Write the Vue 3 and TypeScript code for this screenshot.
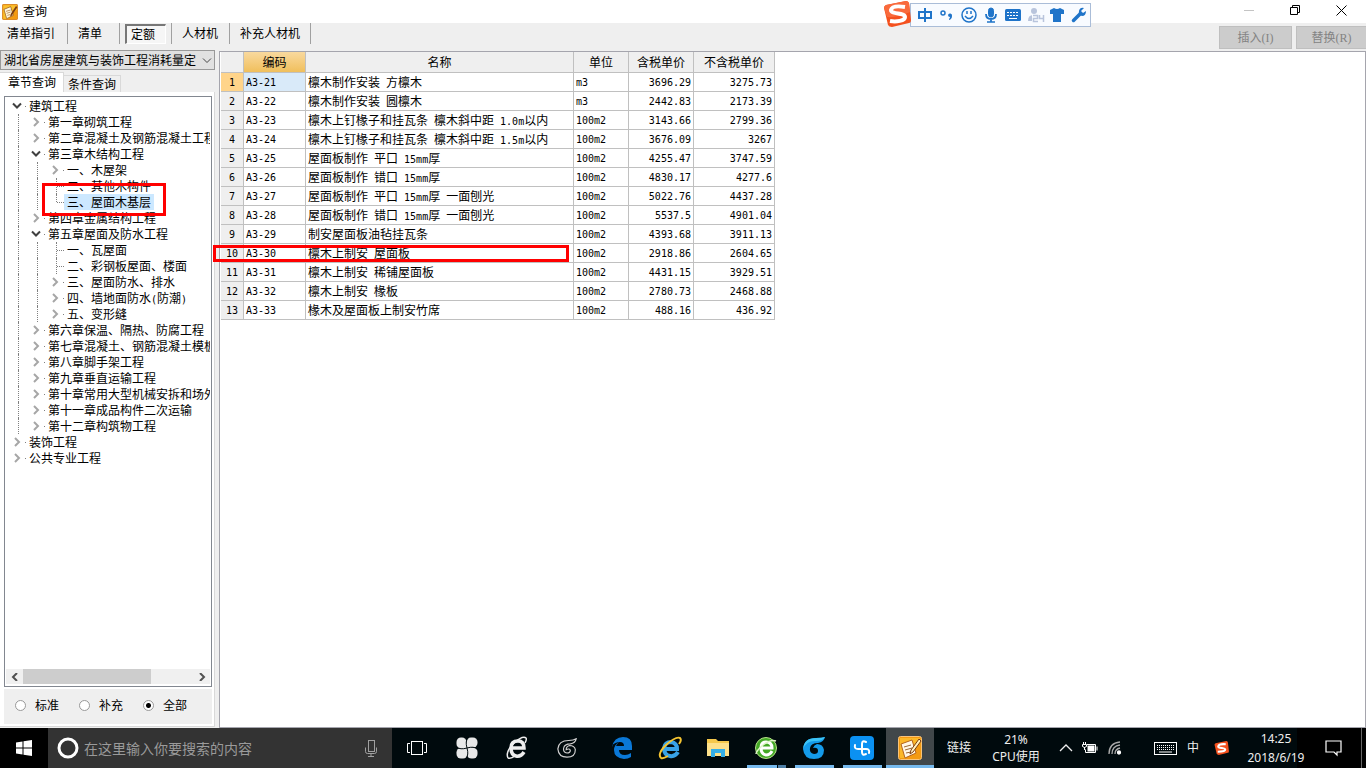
<script setup lang="ts">
import { ref } from 'vue'

interface TreeRow {
  label: string
  level: number
  kind: 'open' | 'closed' | 'leaf' | 'last'
}

interface QuotaRow {
  code: string
  name: string
  unit: string
  taxed: string
  untaxed: string
}

const modes = ['清单指引', '清单', '定额', '人材机', '补充人材机']
const activeMode = ref('定额')
const scope = ref('全部')
const selectedNode = ref('三、屋面木基层')
const selectedRow = ref(0)
const keyword = ref('')

const tree: TreeRow[] = [
  { label: '建筑工程', level: 0, kind: 'open' },
  { label: '第一章砌筑工程', level: 1, kind: 'closed' },
  { label: '第二章混凝土及钢筋混凝土工程', level: 1, kind: 'closed' },
  { label: '第三章木结构工程', level: 1, kind: 'open' },
  { label: '一、木屋架', level: 2, kind: 'closed' },
  { label: '二、其他木构件', level: 2, kind: 'leaf' },
  { label: '三、屋面木基层', level: 2, kind: 'last' },
  { label: '第四章金属结构工程', level: 1, kind: 'closed' },
  { label: '第五章屋面及防水工程', level: 1, kind: 'open' },
  { label: '一、瓦屋面', level: 2, kind: 'leaf' },
  { label: '二、彩钢板屋面、楼面', level: 2, kind: 'leaf' },
  { label: '三、屋面防水、排水', level: 2, kind: 'closed' },
  { label: '四、墙地面防水(防潮)', level: 2, kind: 'closed' },
  { label: '五、变形缝', level: 2, kind: 'closed' },
  { label: '第六章保温、隔热、防腐工程', level: 1, kind: 'closed' },
  { label: '第七章混凝土、钢筋混凝土模板', level: 1, kind: 'closed' },
  { label: '第八章脚手架工程', level: 1, kind: 'closed' },
  { label: '第九章垂直运输工程', level: 1, kind: 'closed' },
  { label: '第十章常用大型机械安拆和场外', level: 1, kind: 'closed' },
  { label: '第十一章成品构件二次运输', level: 1, kind: 'closed' },
  { label: '第十二章构筑物工程', level: 1, kind: 'closed' },
  { label: '装饰工程', level: 0, kind: 'closed' },
  { label: '公共专业工程', level: 0, kind: 'closed' },
]

const rows: QuotaRow[] = [
  { code: 'A3-21', name: '檩木制作安装 方檩木', unit: 'm3', taxed: '3696.29', untaxed: '3275.73' },
  { code: 'A3-22', name: '檩木制作安装 圆檩木', unit: 'm3', taxed: '2442.83', untaxed: '2173.39' },
  { code: 'A3-23', name: '檩木上钉椽子和挂瓦条 檩木斜中距 1.0m以内', unit: '100m2', taxed: '3143.66', untaxed: '2799.36' },
  { code: 'A3-24', name: '檩木上钉椽子和挂瓦条 檩木斜中距 1.5m以内', unit: '100m2', taxed: '3676.09', untaxed: '3267' },
  { code: 'A3-25', name: '屋面板制作 平口 15mm厚', unit: '100m2', taxed: '4255.47', untaxed: '3747.59' },
  { code: 'A3-26', name: '屋面板制作 错口 15mm厚', unit: '100m2', taxed: '4830.17', untaxed: '4277.6' },
  { code: 'A3-27', name: '屋面板制作 平口 15mm厚 一面刨光', unit: '100m2', taxed: '5022.76', untaxed: '4437.28' },
  { code: 'A3-28', name: '屋面板制作 错口 15mm厚 一面刨光', unit: '100m2', taxed: '5537.5', untaxed: '4901.04' },
  { code: 'A3-29', name: '制安屋面板油毡挂瓦条', unit: '100m2', taxed: '4393.68', untaxed: '3911.13' },
  { code: 'A3-30', name: '檩木上制安 屋面板', unit: '100m2', taxed: '2918.86', untaxed: '2604.65' },
  { code: 'A3-31', name: '檩木上制安 稀铺屋面板', unit: '100m2', taxed: '4431.15', untaxed: '3929.51' },
  { code: 'A3-32', name: '檩木上制安 椽板', unit: '100m2', taxed: '2780.73', untaxed: '2468.88' },
  { code: 'A3-33', name: '椽木及屋面板上制安竹席', unit: '100m2', taxed: '488.16', untaxed: '436.92' },
]

// Splits a label into half-width and full-width runs.
function runs(text: string): { text: string; half: boolean }[] {
  return (text.match(/[\x20-\x7e]+|[^\x20-\x7e]+/g) ?? []).map((t) => ({
    text: t,
    half: /^[\x20-\x7e]/.test(t),
  }))
}
</script>

<template>
  <div class="desktop">
    <header class="titlebar">
      <svg class="app-icon" width="16" height="16" viewBox="0 0 24 24">
        <rect x="0.5" y="0.5" width="23" height="23" rx="2" fill="#f39a12" stroke="#c96a08" />
        <path d="M2 2h20v6L9 22H2z" fill="#fbc02d" />
        <path d="M3 8l10-4 4 13-10 5z" fill="#fff7dd" stroke="#8a4b12" />
        <path d="M6 11l7-2M7 14l6-2M8 17l4-1" stroke="#a0622a" fill="none" />
        <path d="M21 3l-8 12-1 4 3-2 8-12z" fill="#7a3c10" />
      </svg>
      <h1>查询</h1>
      <div class="win-controls">
        <button aria-label="最小化"><svg width="11" height="11"><path d="M0 5.500h10" stroke="#c4c4c4" /></svg></button>
        <button aria-label="还原">
          <svg width="11" height="11" fill="none" stroke="#000"><path d="M.5 2.500h7v7h-7zM2.500 2.500v-2h7v7h-2" /></svg>
        </button>
        <button aria-label="关闭"><svg width="11" height="11"><path d="M.5.5l10 10M10.500.5l-10 10" stroke="#000" /></svg></button>
      </div>
    </header>

    <nav class="toolbar">
      <div v-for="m in modes" :key="m" class="mode-slot" :class="{ pressed: m === activeMode }">
        <button @click="activeMode = m">{{ m }}</button>
      </div>
      <div class="actions">
        <button disabled>插入<span class="latin">(I)</span></button>
        <button disabled>替换<span class="latin">(R)</span></button>
      </div>
    </nav>

    <div class="ime-bar">
      <svg class="ime-logo" width="30" height="28" viewBox="0 0 30 28">
        <path d="M3 5L23 1q2 0 3 2l2 17q0 3-2 3L9 27q-3 0-4-2L1 8q0-2 2-3z" fill="#f4511e" />
        <path d="M3 5L23 1q2 0 3 2l1 9Q14 18 4 17L1 8q0-2 2-3z" fill="#f96a3c" />
        <path d="M22 7Q9 5 8 10c0 5 14 2 14 7 0 4-9 5-15 4" fill="none" stroke="#fff" stroke-width="4" />
      </svg>
      <div class="ime-icons">
        <button aria-label="中文"><svg width="16" height="16" fill="none" stroke="#1f74c9" stroke-width="2"><path d="M2 5h12v6H2zM8 1v14" /></svg></button>
        <button aria-label="标点"><svg width="16" height="16"><circle cx="4" cy="6" r="2" fill="none" stroke="#1f74c9" stroke-width="1.500" /><path d="M9 8a2 2 0 1 1 4 1q0 3-3 4v-1q1-1 1-2-2 0-2-2z" fill="#1f74c9" /></svg></button>
        <button aria-label="表情"><svg width="16" height="16" fill="none" stroke="#1f74c9" stroke-width="1.500"><circle cx="8" cy="8" r="7" /><path d="M6 4v3M10 4v3M4 9q4 5 8 0" /></svg></button>
        <button aria-label="语音"><svg width="16" height="16" fill="none" stroke="#1f74c9"><rect x="5.500" y="1" width="5" height="9" rx="2.500" fill="#1f74c9" /><path d="M3 7q0 5 5 5t5-5M8 12v3" stroke-width="1.800" /><path d="M4 15h8" stroke-width="1.500" /></svg></button>
        <button aria-label="键盘"><svg width="16" height="16"><rect y="2" width="16" height="12" rx="1.500" fill="#1f74c9" /><path d="M2 5.500h12M2 8.500h12" stroke="#fff" stroke-dasharray="2 1" /><path d="M4 11.500h8" stroke="#fff" /></svg></button>
        <button aria-label="账号" class="user"><svg width="18" height="16"><circle cx="7" cy="4" r="3" fill="#b8c4dc" /><path d="M1 14q0-6 5-6h5v6z" fill="#b8c4dc" /><path d="M5 7h13v9H5z" fill="#f8fbff" /><path d="M6 8.500h4.500v3H6.500v3H11M12.500 8v3.500h4M16.500 8v7" fill="none" stroke="#b8c4dc" stroke-width="1.500" /></svg></button>
        <button aria-label="皮肤"><svg width="16" height="16"><path d="M1 3l4-2q3 2 6 0l4 2v4h-3v8H4V7H1z" fill="#1f74c9" /></svg></button>
        <button aria-label="工具"><svg width="16" height="16"><path d="M2.500 13.500L9 7" stroke="#1f74c9" stroke-width="3.500" stroke-linecap="round" /><path d="M13 1q-4-1-5 3-1 4 3 5 4 0 4-5l-3 2-2-2z" fill="#1f74c9" /></svg></button>
      </div>
    </div>

    <main class="content">
      <aside class="side">
        <div class="combo">
          <select aria-label="定额库"><option>湖北省房屋建筑与装饰工程消耗量定</option></select>
          <svg width="10" height="6" fill="none" stroke="#444"><path d="M1 .5l4 4 4-4" /></svg>
        </div>
        <div class="tabs" role="tablist">
          <button role="tab" aria-selected="true" class="on">章节查询</button>
          <button role="tab" aria-selected="false">条件查询</button>
        </div>
        <div class="pane">
          <div class="tree-box">
            <ul class="tree" role="tree">
              <li
                v-for="n in tree"
                :key="n.label"
                role="treeitem"
                :aria-selected="n.label === selectedNode"
                @click="selectedNode = n.label"
              >
                <template v-if="n.level > 0">
                  <i class="guide"></i>
                  <i v-if="n.level > 1" class="guide"></i>
                </template>
                <i v-if="n.kind === 'leaf' || n.kind === 'last'" class="elbow" :class="n.kind"></i>
                <button v-else class="twist" :class="n.kind" aria-label="展开或折叠">
                  <svg v-if="n.kind === 'open'" width="10" height="10" fill="none" stroke="#404040" stroke-width="2"><path d="M1 2.500l4 4 4-4" /></svg>
                  <svg v-else width="10" height="10" fill="none" stroke="#a6a6a6" stroke-width="2"><path d="M3 1l4 4-4 4" /></svg>
                </button>
                <span class="label" :class="{ selected: n.label === selectedNode }"><span v-for="(r, i) in runs(n.label)" :key="i" :class="{ half: r.half }">{{ r.text }}</span></span>
              </li>
            </ul>
            <div class="hscroll">
              <button aria-label="向左"><svg width="8" height="8" fill="none" stroke="#505050" stroke-width="2"><path d="M6 0L2 4l4 4" /></svg></button>
              <div class="track"><div class="thumb"></div></div>
              <button aria-label="向右"><svg width="8" height="8" fill="none" stroke="#505050" stroke-width="2"><path d="M2 0l4 4-4 4" /></svg></button>
            </div>
          </div>
          <div class="scope">
            <label v-for="s in ['标准', '补充', '全部']" :key="s"><input v-model="scope" type="radio" name="scope" :value="s" />{{ s }}</label>
          </div>
          <div class="mark tree-mark"></div>
        </div>
      </aside>

      <section class="grid-pane">
        <table>
          <colgroup><col class="c-no" /><col class="c-code" /><col class="c-name" /><col class="c-unit" /><col class="c-tax" /><col class="c-net" /></colgroup>
          <thead>
            <tr><th></th><th class="sorted">编码</th><th>名称</th><th>单位</th><th>含税单价</th><th>不含税单价</th></tr>
          </thead>
          <tbody>
            <tr v-for="(r, i) in rows" :key="r.code" :class="{ current: i === selectedRow }" @click="selectedRow = i">
              <th scope="row"><span class="half">{{ i + 1 }}</span></th>
              <td class="code"><span class="half">{{ r.code }}</span></td>
              <td class="name"><span v-for="(p, k) in runs(r.name)" :key="k" :class="{ half: p.half }">{{ p.text }}</span></td>
              <td><span class="half">{{ r.unit }}</span></td>
              <td class="num"><span class="half">{{ r.taxed }}</span></td>
              <td class="num"><span class="half">{{ r.untaxed }}</span></td>
            </tr>
          </tbody>
        </table>
        <div class="mark row-mark"></div>
      </section>
    </main>

    <footer class="taskbar">
      <button class="start" aria-label="开始">
        <svg width="16" height="16" fill="#fff"><path d="M0 2.500L6.500 1.500v6H0zM7.500 1.300L16 0v7.500H7.500zM0 8.500h6.500v6L0 13.500zM7.500 8.500H16V16l-8.500-1.300z" /></svg>
      </button>
      <label class="search">
        <svg width="22" height="22" fill="none"><circle cx="11" cy="11" r="9" stroke="#fff" stroke-width="3" /></svg>
        <input v-model="keyword" type="text" placeholder="在这里输入你要搜索的内容" />
        <svg width="12" height="18" fill="none" stroke="#a0a0a0"><rect x="3.500" y="1.500" width="6" height="11" /><path d="M.5 8.500v4q0 2 2 2h7q2 0 2-2v-4M6 14.500v3M3 17.500h6" /></svg>
      </label>
      <div class="apps wide">
        <button aria-label="任务视图"><svg width="20" height="16" fill="none" stroke="#fff"><rect x="4.500" y="1.500" width="11" height="13" /><path d="M3 3.500H.5v9H3M17 3.500h2.500v9H17" /></svg></button>
        <button aria-label="风扇">
          <svg width="22" height="22" fill="#e8e8e8"><rect x="0.500" y="0.500" width="10" height="11" rx="4.500" /><rect x="10.500" y="0.500" width="11" height="10" rx="4.500" /><rect x="11" y="10.500" width="10.500" height="11" rx="4.500" /><rect x="0.500" y="11" width="11" height="10.500" rx="4.500" /><path d="M6 6h10v10H6z" /><path d="M11 11Q4 13 1 10M11 11Q9 4 12 1M11 11q7-2 10 1M11 11q2 7-1 10" fill="none" stroke="#000a0d" /></svg>
        </button>
        <button aria-label="浏览器"><svg width="22" height="24" fill="none" stroke="#eee"><path d="M18 16q-3 5-8 4-5-1-5-8 0-7 7-7 6 0 6 7H6" stroke-width="3.500" /><path d="M2 22Q-1 16 8 7 17-1 20 2q1 1-1 5M2 22q3 1 7-2" stroke-width="1.500" /></svg></button>
        <button aria-label="广联达"><svg width="20" height="20" viewBox="0 0 24 24" fill="none" stroke="#d0d0d0" stroke-width="1.400"><path d="M23 1q-3 2-9 2Q2 3 1 13q1 10 11 10 10 0 10-9-1-5-7-5-4 1-4 5 4-2 5 1 0 3-4 3-5-1-4-6Q9 7 16 7q6-1 7-6z" /></svg></button>
      </div>
      <div class="apps">
        <button aria-label="Edge"><svg width="20" height="22" fill="#0a78d7"><path d="M0 10Q2 0 11 0q9 0 9 9v4H7q0 5 6 5 3 0 6-2v4q-3 2-7 2-10-1-10-9 0-5 5-8-2 2-3 4h8q0-4-4-4-6 0-9 5z" /></svg></button>
        <button aria-label="Internet Explorer"><svg width="24" height="24" fill="none"><path d="M20 16q-3 5-8 4-6-1-6-8 1-6 7-6 6 1 6 7H7" stroke="#38a3e8" stroke-width="4" /><path d="M3 22Q-1 18 8 9 18 0 22 2q2 2-1 6M3 22q2 1 7-2" stroke="#f5c531" stroke-width="2" /></svg></button>
        <button aria-label="文件资源管理器"><svg width="22" height="18"><path d="M0 0h9l2 2h11v15H0z" fill="#f5c84c" /><path d="M0 4h22v13H0z" fill="#fde08a" /><path d="M4 18v-8h14v8h-4v-4H8v4z" fill="#35aee6" /></svg></button>
        <button aria-label="360浏览器" class="running multi"><svg width="22" height="22" fill="none"><circle cx="11" cy="11" r="10.500" fill="#43a825" stroke="#b6e08a" /><path d="M17 14q-2 4-6 4-5-1-5-7t5-6q6 0 6 6H7" stroke="#fff" stroke-width="3" /><path d="M1 17Q1 14 8 8 16 2 21 4" stroke="#dff5c8" stroke-width="1.500" /></svg></button>
        <button aria-label="广联达云" class="running"><svg width="24" height="24"><path d="M23 1q-3 1-9 1Q2 2 1 13q1 10 11 10 10 0 10-9-1-6-7-6-3 1-4 4 5-1 5 3 0 3-4 3-5-1-4-6Q9 7 16 7q6-1 7-6z" fill="#149bea" /><path d="M23 1q-3 1-9 1Q2 2 1 13 5 4 14 5q7 0 9-4z" fill="#3cc4f7" /></svg></button>
        <button aria-label="云助手" class="running"><svg width="24" height="24" fill="none"><rect width="24" height="24" rx="4" fill="#0b91f2" /><path d="M16 6q-4-2-4 2v8q0 4 4 2M5 9q-1 4 3 4h8q4 0 3 4" stroke="#fff" stroke-width="2" stroke-linecap="round" /></svg></button>
        <button aria-label="查询" class="running focused"><svg width="24" height="24" viewBox="0 0 24 24"><rect x="0.500" y="0.500" width="23" height="23" rx="2" fill="#f39a12" stroke="#f9c47a" /><path d="M2 2h20v5L8 22H2z" fill="#fbb829" /><path d="M3 8l11-4 4 13-11 5z" fill="#fff7e6" stroke="#b5651d" /><path d="M6 11l7-2M7 14l7-2M8 17l5-1" stroke="#9b6a3a" fill="none" /><path d="M21 3l-8 11-1 4 3-2 8-11z" fill="#fff0c0" stroke="#7a3c10" /></svg></button>
      </div>
      <div class="tray">
        <span class="links">链接</span>
        <span class="cpu">21%<br />CPU使用</span>
        <button class="t24" aria-label="显示隐藏的图标"><svg width="14" height="8" fill="none" stroke="#eee" stroke-width="1.300"><path d="M1 7l6-6 6 6" /></svg></button>
        <button class="t24" aria-label="电源"><svg width="16" height="12" fill="none" stroke="#fff"><path d="M5 2.500h8.500v8h-10v-3" /><rect x="6" y="4" width="6" height="5" fill="#fff" /><path d="M15 4.500v4M1.500 0v2M3.500 0v2M.5 2.500h4v2l-2 1-2-1zM2.500 5v3" /></svg></button>
        <button class="wifi" aria-label="网络"><svg width="14" height="14" fill="none" stroke="#aaa" stroke-width="1.300"><path d="M1 13Q1 2 12 1M4 13q0-8 8-9M7 13q0-5 5-6" /><circle cx="11" cy="11.500" r="1.500" fill="#fff" stroke="#fff" /></svg></button>
        <button class="t28" aria-label="触摸键盘"><svg width="23" height="13" fill="none" stroke="#fff"><rect x="0.500" y="0.500" width="22" height="12" /><path d="M3 3.500h17M3 5.500h17M3 7.500h17" stroke-dasharray="1 1" /><path d="M5 10h13" /></svg></button>
        <button class="t28">中</button>
        <button class="t30" aria-label="搜狗输入法"><svg width="16" height="16" viewBox="0 0 30 28"><path d="M3 5L23 1q2 0 3 2l2 17q0 3-2 3L9 27q-3 0-4-2L1 8q0-2 2-3z" fill="#f4511e" /><path d="M22 7Q9 6 8 11c0 4 13 2 13 6 0 4-8 4-14 4" fill="none" stroke="#fff" stroke-width="4" /></svg></button>
        <span class="clock">14:25<br />2018/6/19</span>
        <button class="note" aria-label="操作中心"><svg width="18" height="17" fill="none" stroke="#fff"><path d="M1 1h15v11h-4v3l-3-3H1z" stroke-width="1.200" /></svg></button>
        <i class="peek"></i>
      </div>
    </footer>
  </div>
</template>

<style>
body {
  margin: 0;
  background: #efefef;
}
</style>

<style scoped>
.desktop {
  position: relative;
  display: flex;
  flex-direction: column;
  min-height: 100vh;
  background: #efefef;
  color: #000;
  font-family: "Liberation Sans", "Noto Sans CJK SC", sans-serif;
  font-size: 12px;
  line-height: 16px;
}
button {
  display: inline-flex;
  align-items: center;
  justify-content: center;
  margin: 0;
  padding: 0;
  border: 0;
  background: none;
  color: inherit;
  font: inherit;
}
svg {
  display: block;
  flex: none;
}
.half {
  font-family: "DejaVu Sans Mono", monospace;
  font-size: 10px;
  line-height: 10px;
  white-space: pre;
}

.titlebar {
  display: flex;
  align-items: center;
  height: 23px;
  padding-left: 2px;
  background: #fff;
}
.titlebar h1 {
  margin: 0 0 0 5px;
  font-size: 12px;
  font-weight: 400;
}
.win-controls {
  display: flex;
  margin-left: auto;
  margin-right: 2px;
  margin-bottom: 3px;
}
.win-controls button {
  width: 46px;
}

.toolbar {
  display: flex;
  align-items: flex-start;
  height: 27px;
}
.mode-slot {
  height: 21px;
  padding: 0 10px;
  border-right: 1px solid #a0a0a0;
}
.mode-slot button {
  height: 20px;
  padding-top: 2px;
  white-space: nowrap;
}
.mode-slot:first-child {
  padding: 0 12px 0 7px;
}
.mode-slot:nth-child(2) {
  padding: 0 17px 0 10px;
}
.mode-slot:nth-child(4) {
  padding: 0 11px 0 10px;
}
.mode-slot.pressed {
  box-sizing: border-box;
  height: 21px;
  padding: 1px 5px 0;
}
.mode-slot.pressed button {
  justify-content: flex-start;
  width: 41px;
  padding: 1px 0 0 4px;
  border: 1px solid #fff;
  border-top: 2px solid #777;
  border-left: 2px solid #777;
  background: #f6f6f6;
}
.actions {
  display: flex;
  gap: 4px;
  margin: 3px 0 0 auto;
}
.actions button {
  width: 73px;
  height: 23px;
  border: 1px solid #bfbfbf;
  background: #ccc;
  color: #838383;
}
.actions button:last-child {
  width: 70px;
  border-right: 0;
}
.latin {
  font-family: "Liberation Serif", serif;
  font-size: 12px;
}

.ime-bar {
  position: absolute;
  top: 3px;
  right: 275px;
  width: 181px;
  height: 24px;
  box-sizing: border-box;
  border: 1px solid #aabdd8;
  background: #f8fbff;
}
.ime-logo {
  position: absolute;
  left: -28px;
  top: -4px;
}
.ime-icons {
  display: flex;
  height: 22px;
  padding-left: 3px;
}
.ime-icons button {
  width: 22px;
}
.ime-icons .user {
  padding-left: 2px;
}

.content {
  display: flex;
  flex: 1;
}
.side {
  display: flex;
  flex: none;
  flex-direction: column;
  width: 215px;
}
.combo {
  position: relative;
  display: flex;
}
.combo select {
  width: 100%;
  height: 20px;
  padding: 2px 18px 0 3px;
  border: 1px solid #999;
  border-radius: 0;
  background: #e1e1e1;
  color: #000;
  font: inherit;
  appearance: none;
}
.combo svg {
  position: absolute;
  right: 3px;
  top: 8px;
}
.tabs {
  display: flex;
  align-items: flex-end;
  margin-top: 2px;
}
.tabs button {
  height: 17px;
  padding: 1px 4px 0;
  border: 1px solid #d9d9d9;
  border-bottom: 0;
  border-left: 0;
}
.tabs .on {
  height: 20px;
  padding: 0 7px 0 8px;
  background: #fff;
}
.pane {
  position: relative;
  display: flex;
  flex: 1;
  flex-direction: column;
  gap: 2px;
  padding: 4px 2px 2px 4px;
  border-right: 1px solid #d9d9d9;
  border-bottom: 1px solid #d9d9d9;
  margin-bottom: 1px;
  background: #fff;
}
.tree-box {
  display: flex;
  flex: 1;
  flex-direction: column;
  padding: 1px 1px 2px;
  border: 1px solid #828790;
}
.tree {
  flex: 1;
  margin: 0;
  padding: 0 0 0 1px;
  list-style: none;
  overflow: hidden;
}
.tree li {
  display: flex;
  height: 16px;
  line-height: 18px;
  white-space: nowrap;
}
.guide,
.elbow,
.twist {
  position: relative;
  flex: none;
  width: 19px;
  height: 16px;
}
.guide::before,
.elbow::before {
  content: "";
  position: absolute;
  left: 11px;
  top: 0;
  height: 16px;
  border-left: 1px dotted #808080;
}
.elbow.last::before {
  height: 8px;
}
.elbow::after {
  content: "";
  position: absolute;
  left: 12px;
  right: 0;
  top: 8px;
  border-top: 1px dotted #808080;
}
.twist::after {
  content: "";
  position: absolute;
  right: 0;
  top: 8px;
  width: 1px;
  height: 1px;
  background: #808080;
}
.label {
  padding: 0 3px;
}
.label.selected {
  background: #cce8ff;
}
.hscroll {
  display: flex;
  height: 15px;
  background: #f0f0f0;
}
.hscroll button {
  width: 17px;
}
.track {
  flex: 1;
}
.thumb {
  width: 75%;
  height: 100%;
  background: #cdcdcd;
}
.scope {
  display: flex;
  align-items: center;
  box-sizing: border-box;
  height: 35px;
  padding: 0 0 2px 11px;
  background: #efefef;
}
.scope label {
  display: flex;
  align-items: center;
  width: 64px;
}
.scope input {
  width: 11px;
  height: 11px;
  margin: 0 9px 0 0;
  border: 1px solid #999;
  border-radius: 50%;
  background: #fff;
  appearance: none;
}
.scope input:checked {
  background: radial-gradient(circle, #000 0 2px, #fff 3px);
}

.mark {
  position: absolute;
  box-sizing: border-box;
  border: 3px solid #f00;
  pointer-events: none;
}
.tree-mark {
  left: 42px;
  top: 91px;
  width: 124px;
  height: 33px;
}
.row-mark {
  left: -7px;
  top: 193px;
  width: 356px;
  height: 17px;
}

.grid-pane {
  position: relative;
  flex: 1;
  margin: 1px 0 0 4px;
  padding-left: 1px;
  border: 1px solid #a5a5ad;
  background: #fff;
}
table {
  table-layout: fixed;
  width: 554px;
  border-collapse: separate;
  border-spacing: 0;
}
.c-no { width: 23px; }
.c-code { width: 62px; }
.c-name { width: 268px; }
.c-unit { width: 55px; }
.c-tax { width: 65px; }
.c-net { width: 81px; }
th,
td {
  height: 18px;
  padding: 0 2px;
  border-right: 1px solid #c0c0c0;
  border-bottom: 1px solid #c0c0c0;
  font-weight: 400;
  line-height: 16px;
  text-align: left;
  white-space: nowrap;
}
.name {
  height: 16px;
  padding-top: 2px;
}
th {
  padding: 0;
  background: #efefef;
  text-align: center;
}
thead th {
  height: 18px;
  padding: 2px 0 0;
}
.sorted {
  background: linear-gradient(#f9d99e, #f0bf5c);
}
.current th {
  background: #ffd48a;
}
.current .code {
  background: #d9eaf9;
}
.num {
  text-align: right;
}

.taskbar {
  display: flex;
  height: 40px;
  background: #000a0d;
  color: #eee;
}
.start {
  width: 48px;
  background: #000;
}
.search {
  display: flex;
  align-items: center;
  width: 344px;
  box-sizing: border-box;
  padding: 0 15px 0 9px;
  background: #333;
}
.search input {
  flex: 1;
  min-width: 0;
  margin: 0;
  padding: 2px 0 0 5px;
  border: 0;
  outline: 0;
  background: none;
  color: #eee;
  font: inherit;
  font-size: 14px;
}
.search input::placeholder {
  color: #9a9a9a;
  opacity: 1;
}
.apps {
  display: flex;
  margin-left: 6px;
}
.apps.wide {
  margin-left: 0;
}
.apps button {
  width: 48px;
}
.apps.wide button {
  width: 50px;
}
.apps .running {
  background: linear-gradient(#76b9ed, #76b9ed) center bottom / 39px 3px no-repeat;
}
.apps .multi {
  background: linear-gradient(90deg, #76b9ed 30px, #000a0d 30px 31px, #4e7fa6 31px) center bottom / 39px 3px no-repeat;
}
.apps .focused {
  background: linear-gradient(#76b9ed, #76b9ed) center bottom / 48px 3px no-repeat #41474a;
}
.tray {
  display: flex;
  align-items: center;
  margin-left: auto;
  background: linear-gradient(90deg, #000a0d 357px, #000 357px);
  text-align: center;
}
.links {
  width: 38px;
}
.cpu {
  width: 76px;
  line-height: 17px;
}
.tray button {
  height: 40px;
}
.t24 {
  width: 24px;
}
.wifi {
  width: 26px;
  margin-right: 23px;
}
.t28 {
  width: 28px;
}
.t30 {
  width: 30px;
}
.clock {
  width: 78px;
  line-height: 19px;
}
.cpu,
.clock {
  font-family: "Noto Sans", "Noto Sans CJK SC", sans-serif;
}
.note {
  width: 37px;
}
.peek {
  width: 4px;
  height: 40px;
  margin-left: 9px;
  border-left: 1px solid #666;
}
</style>
